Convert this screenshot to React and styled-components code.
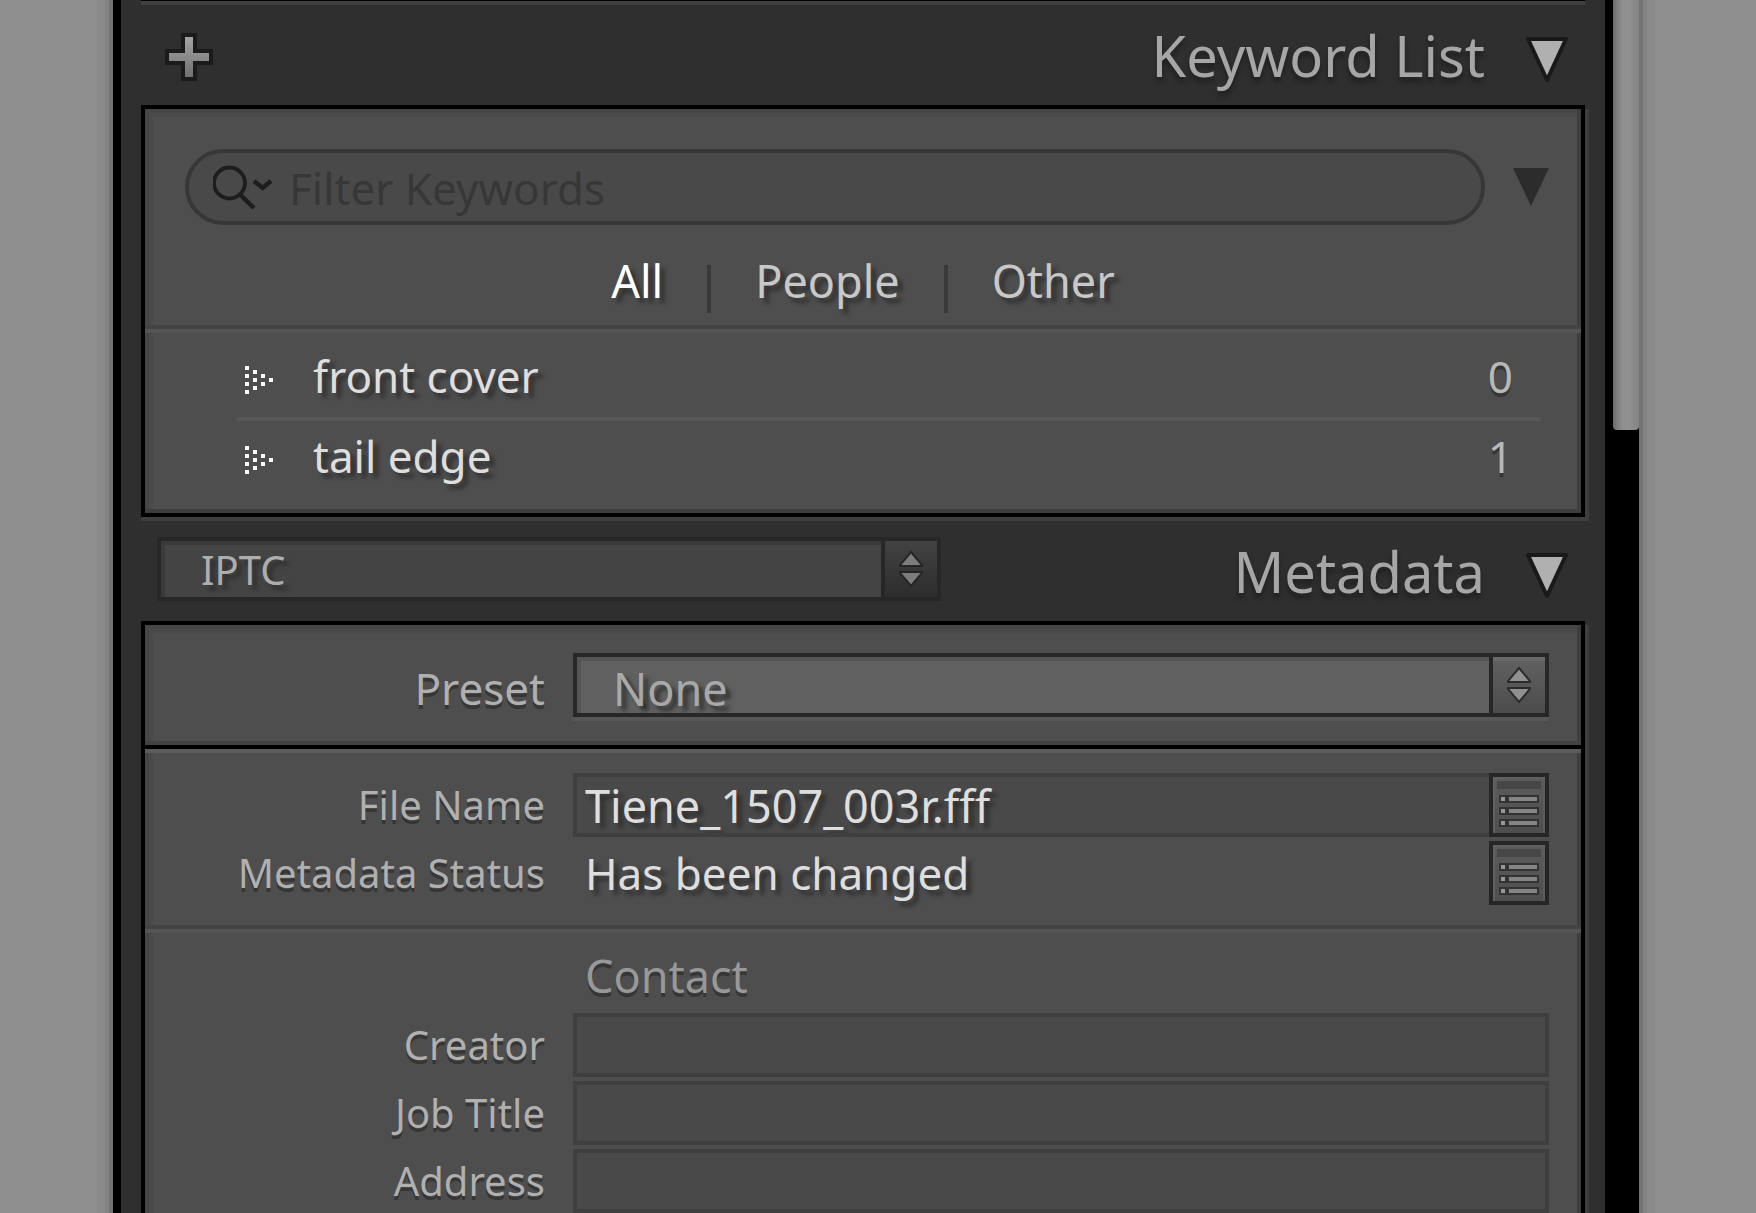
import React, { useId, useState } from "react";
import styled, { createGlobalStyle } from "styled-components";

const GlobalStyle = createGlobalStyle`
  *, *::before, *::after { box-sizing: border-box; }
  body {
    margin: 0;
    background: #8f8f8f;
    font-family: "Noto Sans", "Open Sans", sans-serif;
  }
  button, input, select {
    font-family: inherit;
    margin: 0;
    padding: 0;
    border: 0;
    border-radius: 0;
    background: none;
    outline: none;
  }
  h2, h3, p, ul { margin: 0; padding: 0; font-weight: 400; }
  svg { display: block; flex: none; }
`;

const hardShadow = "0 4px 0 #363636";
const softShadow = "5px 5px 4px #2e2e2e";

const Desktop = styled.div`
  display: grid;
  grid-template-columns: 113px minmax(0, 1fr) 34px 117px;
  min-height: 100vh;
`;

const Backdrop = styled.div`
  background: linear-gradient(
    to ${(p) => p.$away},
    #737373 0 4px,
    #828282 4px 8px,
    #8a8a8a 8px 16px,
    #8f8f8f 16px
  );
`;

const Panel = styled.main`
  display: flex;
  flex-direction: column;
  min-width: 0;
  padding: 0 20px;
  border-left: 8px solid #000;
  background: #2f2f2f;
`;

const Track = styled.div`
  padding-left: 8px;
  background: #000;
`;

const Thumb = styled.div`
  height: 430px;
  border-radius: 0 0 4px 4px;
  background: linear-gradient(to right, #6a6a6a, #828282 5px, #909090 10px, #909090 16px, #848484 26px);
`;

const PanelEdge = styled.div`
  height: 5px;
  border-top: 1px solid #000;
  background: #404040;
`;

const SectionHeader = styled.header`
  display: flex;
  align-items: center;
  justify-content: space-between;
  gap: 40px;
  height: 100px;
  padding: 0 16px;
`;

const AddButton = styled.button`
  padding: 0 8px;
  cursor: pointer;
`;

const Title = styled.h2`
  font-size: 56px;
  line-height: 80px;
`;

const TitleButton = styled.button`
  display: flex;
  align-items: center;
  gap: 40px;
  color: #a6a6a6;
  font-size: 56px;
  line-height: 80px;
  white-space: nowrap;
  text-shadow: 0 5px 5px #1f1f1f;
  cursor: pointer;
`;

const Box = styled.section`
  flex: ${(p) => (p.$open ? "1 0 auto" : "none")};
  margin-bottom: ${(p) => (p.$open ? "0" : "4px")};
  border: 4px solid #000;
  border-bottom-width: ${(p) => (p.$open ? "0" : "4px")};
  background: #4e4e4e;
  box-shadow:
    0 4px 0 #3e3e3e,
    4px 4px 0 #3e3e3e,
    inset -4px ${(p) => (p.$open ? "0" : "-4px")} 0 #3e3e3e,
    inset 4px 4px 0 #464646,
    inset 8px 8px 0 #4a4a4a;
`;

const FilterRow = styled.div`
  display: flex;
  align-items: center;
  gap: 28px;
  padding: 40px 32px 0 40px;
`;

const SearchField = styled.label`
  display: flex;
  flex: 1;
  align-items: center;
  gap: 16px;
  min-width: 0;
  height: 76px;
  padding: 0 24px;
  border: 4px solid #373737;
  border-radius: 38px;
  background: #494949;
`;

const SearchInput = styled.input`
  flex: 1;
  min-width: 0;
  height: 68px;
  padding-top: 2px;
  color: #dedede;
  font-size: 44px;
  &::placeholder { color: #373737; opacity: 1; }
`;

const PlainButton = styled.button`
  cursor: pointer;
`;

const Tabs = styled.div`
  display: flex;
  justify-content: center;
  padding: 40px 0 12px;
`;

const Tab = styled.button`
  height: 48px;
  padding: 0 44px 16px;
  color: ${(p) => (p.$active ? "#ffffff" : "#c8c8c8")};
  font-size: 45px;
  line-height: 32px;
  text-shadow: ${softShadow};
  cursor: pointer;
  & + & { border-left: 4px solid #393939; }
`;

const Groove = styled.div`
  height: 8px;
  border-top: 4px solid #434343;
  border-bottom: 4px solid #545454;
`;

const KeywordItems = styled.ul`
  padding: 8px 40px 16px 92px;
  list-style: none;
`;

const KeywordItem = styled.li`
  display: flex;
  align-items: center;
  gap: 40px;
  padding: 0 28px 6px 8px;
  color: #dedede;
  font-size: 44px;
  line-height: 70px;
  & + & { border-top: 4px solid #585858; }
`;

const KeywordName = styled.span`
  flex: 1;
  text-shadow: ${softShadow};
`;

const KeywordCount = styled.span`
  color: #b8b8b8;
  text-shadow: ${hardShadow};
`;

const SelectFrame = styled.div`
  display: grid;
  grid-template-columns: minmax(0, 1fr) 56px;
  flex: 0 1 ${(p) => (p.$tone === "dark" ? "784px" : "auto")};
  height: 64px;
  margin-bottom: ${(p) => (p.$tone === "dark" ? "4px" : "0")};
  border: 4px solid #272727;
  background: ${(p) => (p.$tone === "dark" ? "#444444" : "#606060")};
  box-shadow: ${(p) => (p.$tone === "dark" ? "none" : "0 4px 0 #575757")};
`;

const SelectControl = styled.select`
  grid-area: 1 / 1 / 2 / 3;
  appearance: none;
  width: 100%;
  height: 56px;
  padding: ${(p) => (p.$tone === "dark" ? "2px 56px 0 40px" : "8px 56px 0 36px")};
  color: ${(p) => (p.$tone === "dark" ? "#adadad" : "#a8a8a8")};
  font-size: ${(p) => (p.$tone === "dark" ? "40px" : "45px")};
  line-height: 48px;
  text-shadow: ${softShadow};
  box-shadow: inset 4px 4px 0 ${(p) => (p.$tone === "dark" ? "#3a3a3a" : "#545454")};
  cursor: pointer;
`;

const Stepper = styled.span`
  grid-area: 1 / 2;
  display: grid;
  place-items: center;
  border-left: 4px solid #272727;
  background: ${(p) =>
    p.$tone === "dark"
      ? "linear-gradient(#424242, #2d2d2d)"
      : "linear-gradient(#686868 0 4px, #606060 4px, #4c4c4c)"};
  pointer-events: none;
`;

const PresetArea = styled.div`
  padding: 28px 0;
  border-bottom: 4px solid #000;
  box-shadow: inset 0 -4px 0 #424242, 0 4px 0 #5c5c5c;
`;

const FieldGroup = styled.div`
  display: grid;
  gap: 4px;
  padding: ${(p) => (p.$first ? "24px 0 20px" : "0")};
`;

const FieldRow = styled.div`
  display: grid;
  grid-template-columns: 400px minmax(0, 1fr);
  column-gap: 28px;
  padding-right: 32px;
`;

const FieldLabel = styled.label`
  padding-top: ${(p) => (p.$preset ? "6px" : "0")};
  color: #b0b0b0;
  font-size: ${(p) => (p.$preset ? "44px" : "40px")};
  line-height: ${(p) => (p.$preset ? "58px" : "64px")};
  text-align: right;
  white-space: nowrap;
  text-shadow: ${hardShadow};
`;

const FieldBody = styled.div`
  display: flex;
  min-width: 0;
`;

const TextField = styled.input`
  flex: 1;
  min-width: 0;
  height: 64px;
  padding: 0 8px;
  border: 4px solid #3f3f3f;
  border-right-width: ${(p) => (p.$joined ? "0" : "4px")};
  background: #494949;
  color: #dedede;
  font-size: 45px;
  text-shadow: ${softShadow};
`;

const StatusText = styled.output`
  flex: 1;
  padding-left: 12px;
  color: #dedede;
  font-size: 44px;
  line-height: 64px;
  text-shadow: ${softShadow};
`;

const ListButton = styled.button`
  width: 60px;
  height: 64px;
  border: 4px solid #262626;
  background: linear-gradient(#5c5c5c, #4e4e4e);
  box-shadow: inset 2px 2px 0 #616161, inset -2px 0 0 #5c5c5c;
  cursor: pointer;
`;

const GroupTitle = styled.h3`
  height: 80px;
  padding: 4px 0 0 440px;
  color: #989898;
  font-size: 45px;
  line-height: 78px;
  text-shadow: ${hardShadow};
`;

function PlusIcon() {
  return (
    <svg width="48" height="52" viewBox="0 -4 48 52" aria-hidden="true">
      <defs>
        <linearGradient id="plusFill" x1="0" y1="0" x2="0" y2="1">
          <stop offset="0" stopColor="#a4a4a4" />
          <stop offset="1" stopColor="#707070" />
        </linearGradient>
      </defs>
      <path d="M16 0H32V16H48V32H32V48H16V32H0V16H16Z" fill="#1b1b1b" />
      <path d="M20 4H28V20H44V28H28V44H20V28H4V20H20Z" fill="url(#plusFill)" />
    </svg>
  );
}

function DisclosureIcon() {
  return (
    <svg width="44" height="56" viewBox="0 -10 44 56" aria-hidden="true">
      <path d="M3 2H41L22 43Z" fill="#b0b0b0" stroke="#191919" strokeWidth="4" strokeLinejoin="round" />
    </svg>
  );
}

function FilterArrowIcon() {
  return (
    <svg width="36" height="38" viewBox="0 0 36 38" aria-hidden="true">
      <path d="M0 0H36L18 38Z" fill="#2c2c2c" />
    </svg>
  );
}

function SearchIcon() {
  return (
    <svg width="60" height="44" viewBox="0 0 60 44" fill="none" stroke="#1d1d1d" aria-hidden="true">
      <circle cx="16.500" cy="18" r="15.500" strokeWidth="3.800" />
      <path d="M27.500 30L41 43" strokeWidth="4.400" />
      <path d="M41 16L49.500 23L58 16" strokeWidth="4.400" />
    </svg>
  );
}

const dots = [
  [0, 0], [0, 8], [0, 16], [0, 24],
  [8, 4], [8, 12], [8, 20],
  [16, 8], [16, 16],
  [24, 12],
];

function DottedArrowIcon() {
  return (
    <svg width="28" height="36" viewBox="0 -8 28 36" fill="#f8f8f8" shapeRendering="crispEdges" aria-hidden="true">
      {dots.map(([x, y]) => (
        <rect key={`${x}-${y}`} x={x} y={y} width="4" height="4" />
      ))}
    </svg>
  );
}

function StepperIcon({ tone }) {
  const fill = tone === "dark" ? "#7c7c7c" : "#909090";
  const stroke = tone === "dark" ? "#252525" : "#2c2c2c";
  return (
    <svg width="26" height="38" viewBox="0 0 26 38" fill={fill} stroke={stroke} strokeWidth="2" aria-hidden="true">
      <path d="M13 2L24 15V16H2V15Z" />
      <path d="M13 36L24 23V22H2V23Z" />
    </svg>
  );
}

function ListIcon() {
  return (
    <svg width="52" height="56" viewBox="0 0 52 56" shapeRendering="crispEdges" aria-hidden="true">
      <rect x="4" y="4" width="44" height="8" fill="#474747" />
      {[18, 30, 42].map((y) => (
        <g key={y}>
          <rect x="6" y={y} width="40" height="8" fill="#333333" />
          <rect x="8" y={y + 2} width="4" height="4" fill="#979797" />
          <rect x="16" y={y + 2} width="28" height="4" fill="#858585" />
        </g>
      ))}
    </svg>
  );
}

function Header({ title, open, onToggle, children }) {
  return (
    <SectionHeader>
      {children}
      <Title>
        <TitleButton type="button" aria-expanded={open} onClick={onToggle}>
          {title}
          <DisclosureIcon />
        </TitleButton>
      </Title>
    </SectionHeader>
  );
}

function Select({ tone, options, ...rest }) {
  return (
    <SelectFrame $tone={tone}>
      <SelectControl $tone={tone} {...rest}>
        {options.map((o) => (
          <option key={o}>{o}</option>
        ))}
      </SelectControl>
      <Stepper $tone={tone}>
        <StepperIcon tone={tone} />
      </Stepper>
    </SelectFrame>
  );
}

function Field({ label }) {
  const id = useId();
  return (
    <FieldRow>
      <FieldLabel htmlFor={id}>{label}</FieldLabel>
      <FieldBody>
        <TextField id={id} type="text" />
      </FieldBody>
    </FieldRow>
  );
}

const keywords = [
  { name: "front cover", count: 0 },
  { name: "tail edge", count: 1 },
];

export default function App() {
  const [tab, setTab] = useState("All");
  const [keywordsOpen, setKeywordsOpen] = useState(true);
  const [metadataOpen, setMetadataOpen] = useState(true);

  return (
    <>
      <GlobalStyle />
      <Desktop>
        <Backdrop $away="left" />
        <Panel>
          <PanelEdge />
          <Header title="Keyword List" open={keywordsOpen} onToggle={() => setKeywordsOpen(!keywordsOpen)}>
            <AddButton type="button" aria-label="Add keyword">
              <PlusIcon />
            </AddButton>
          </Header>
          {keywordsOpen && (
            <Box>
              <FilterRow>
                <SearchField>
                  <SearchIcon />
                  <SearchInput type="text" placeholder="Filter Keywords" aria-label="Filter Keywords" />
                </SearchField>
                <PlainButton type="button" aria-label="Filter options">
                  <FilterArrowIcon />
                </PlainButton>
              </FilterRow>
              <Tabs>
                {["All", "People", "Other"].map((name) => (
                  <Tab key={name} type="button" $active={tab === name} aria-pressed={tab === name} onClick={() => setTab(name)}>
                    {name}
                  </Tab>
                ))}
              </Tabs>
              <Groove />
              <KeywordItems>
                {keywords.map((k) => (
                  <KeywordItem key={k.name}>
                    <DottedArrowIcon />
                    <KeywordName>{k.name}</KeywordName>
                    <KeywordCount>{k.count}</KeywordCount>
                  </KeywordItem>
                ))}
              </KeywordItems>
            </Box>
          )}
          <Header title="Metadata" open={metadataOpen} onToggle={() => setMetadataOpen(!metadataOpen)}>
            <Select tone="dark" options={["IPTC"]} aria-label="Metadata set" />
          </Header>
          {metadataOpen && (
            <Box $open>
              <PresetArea>
                <FieldRow>
                  <FieldLabel $preset htmlFor="preset">Preset</FieldLabel>
                  <Select tone="light" id="preset" options={["None"]} />
                </FieldRow>
              </PresetArea>
              <FieldGroup $first>
                <FieldRow>
                  <FieldLabel htmlFor="file-name">File Name</FieldLabel>
                  <FieldBody>
                    <TextField id="file-name" type="text" $joined defaultValue="Tiene_1507_003r.fff" />
                    <ListButton type="button" aria-label="File name actions">
                      <ListIcon />
                    </ListButton>
                  </FieldBody>
                </FieldRow>
                <FieldRow>
                  <FieldLabel htmlFor="status">Metadata Status</FieldLabel>
                  <FieldBody>
                    <StatusText id="status">Has been changed</StatusText>
                    <ListButton type="button" aria-label="Metadata status actions">
                      <ListIcon />
                    </ListButton>
                  </FieldBody>
                </FieldRow>
              </FieldGroup>
              <Groove />
              <GroupTitle>Contact</GroupTitle>
              <FieldGroup>
                <Field label="Creator" />
                <Field label="Job Title" />
                <Field label="Address" />
              </FieldGroup>
            </Box>
          )}
        </Panel>
        <Track>
          <Thumb />
        </Track>
        <Backdrop $away="right" />
      </Desktop>
    </>
  );
}
